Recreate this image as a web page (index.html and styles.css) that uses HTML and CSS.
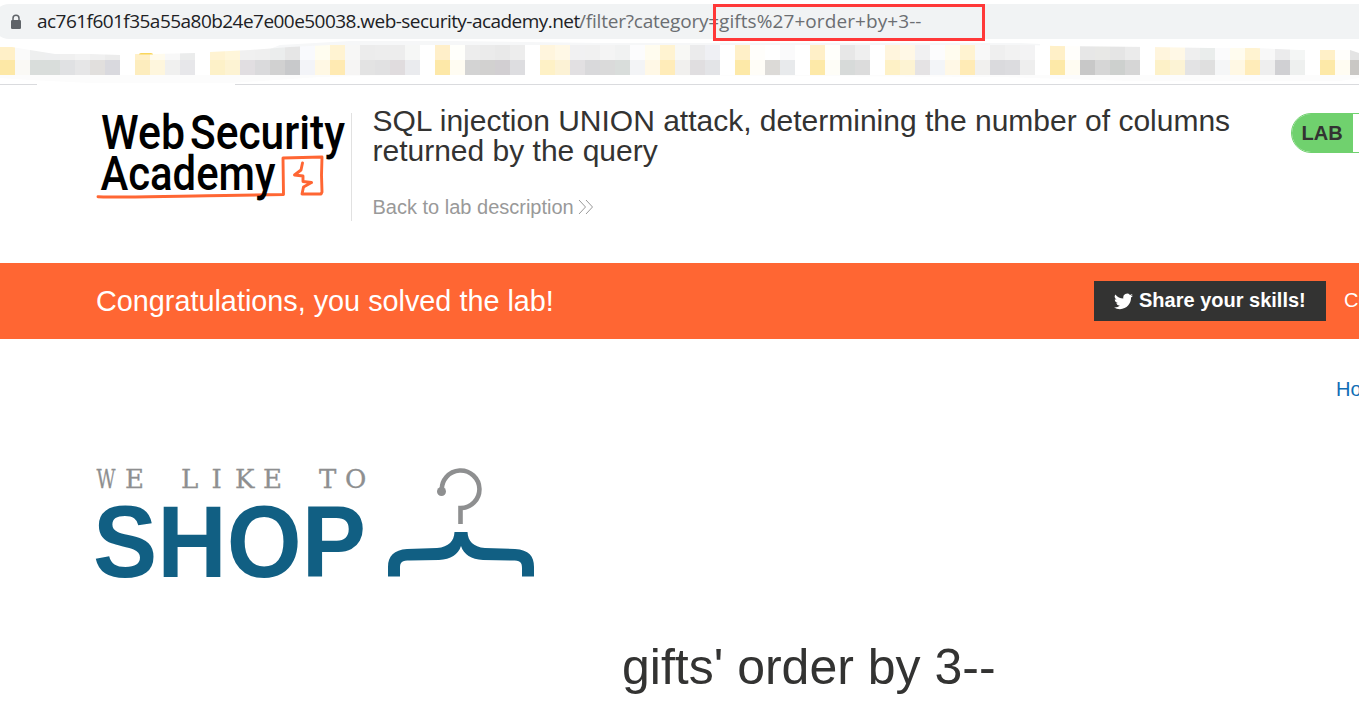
FILE: index.html
```html
<!DOCTYPE html>
<html lang="en">
<head>
<meta charset="utf-8">
<title>SQL injection UNION attack</title>
<link rel="stylesheet" href="styles.css">
</head>
<body>
<div class="browser">
  <div class="omnibox">
    <svg class="lock" width="12" height="16" viewBox="0 0 12 16"><rect x="1" y="6" width="10" height="9" rx="1.3" fill="#5f6368"/><path d="M3 7V4.2a3 3 0 0 1 6 0V7" fill="none" stroke="#5f6368" stroke-width="1.5"/></svg>
    <div class="url"><span class="host">ac761f601f35a55a80b24e7e00e50038.web-security-academy.net</span><span class="path">/filter?category=</span><span class="query">gifts%27+order+by+3--</span></div>
    <div class="mark"></div>
  </div>
  <svg class="bookmarks" width="1359" height="42" viewBox="0 0 1359 42">
    <path d="M280 4 L350 0 L450 0 L600 2 L1020 2 L1040 3 L1040 8 L270 8Z" fill="#f6f7f8"/>
    <path d="M0 33H1359V37L1340 40H1130L1000 36L440 33L320 36L230 42H90L30 39L0 37Z" fill="#fcfcfc"/>
    <defs><clipPath id="strip"><path d="M0 6L12 6L30 9L55 13L90 13L120 14L137 13L155 13L195 12L210 11L250 9L290 6L330 4H1030L1055 5L1150 6L1210 7L1255 7L1300 9H1350L1359 12V34H0Z"/></clipPath></defs>
    <g id="tiles" clip-path="url(#strip)"></g>
    <path d="M139 13.500Q139 12 141 12H151Q153 12 153 13.500Z" fill="#f9d65c"/>
  </svg>
  <div class="edge"><i class="edge-a"></i><i class="edge-b"></i></div>
</div>
<header class="lab-head">
  <svg class="academy" width="255" height="108" viewBox="96 113 255 108">
    <g class="academy-text">
      <text x="101" y="149" textLength="84" lengthAdjust="spacingAndGlyphs">Web</text>
      <text x="190" y="149" textLength="155" lengthAdjust="spacingAndGlyphs">Security</text>
    </g>
    <g fill="none" stroke="#ff6633" stroke-linejoin="round" stroke-linecap="round">
      <path d="M98 196.700C140 198 190 195.500 225 195.500L283.500 194.500L283 158L322 157L321.500 175L322 192L321 194L302 194L303.500 187L311.500 182.500L303 181.500L303 176L294.500 175L301 170L302.500 163" stroke-width="2.900"/>
    </g>
    <text class="academy-text" x="100.500" y="189.500" textLength="175" lengthAdjust="spacingAndGlyphs">Academy</text>
  </svg>
  <div class="title-box">
    <h2>SQL injection UNION attack, determining the number of columns<br>returned by the query</h2>
    <a class="back"><span>Back to lab description</span><svg width="16" height="18" viewBox="0 0 16 18"><path d="M1 1L7.500 8L1 15M8 1L14.500 8L8 15" fill="none" stroke="#999" stroke-width="1"/></svg></a>
  </div>
  <div class="status"><span>LAB</span></div>
</header>
<section class="banner">
  <h4>Congratulations, you solved the lab!</h4>
  <a class="share"><svg width="19" height="17" viewBox="0 0 24 20"><path fill="#fff" d="M24 2.400a9.800 9.800 0 0 1-2.800.800A4.900 4.900 0 0 0 23.300.500a9.900 9.900 0 0 1-3.100 1.200A4.900 4.900 0 0 0 11.800 6.100 14 14 0 0 1 1.700 1a4.900 4.900 0 0 0 1.500 6.600A4.900 4.900 0 0 1 1 7v.100a4.900 4.900 0 0 0 3.900 4.800 5 5 0 0 1-2.200.100 4.900 4.900 0 0 0 4.600 3.400A9.900 9.900 0 0 1 0 17.500 14 14 0 0 0 7.500 19.700c9.100 0 14.300-7.700 14-14.600A10 10 0 0 0 24 2.400Z"/></svg><span>Share your skills!</span></a>
  <span class="continue">Continue learning</span>
</section>
<main>
  <nav><a>Home</a></nav>
  <svg class="shop" width="440" height="112" viewBox="95 467 440 112">
    <g class="we">
      <text x="96.500" y="488" textLength="19" lengthAdjust="spacingAndGlyphs">W</text>
      <text x="125" y="488">E</text>
      <text y="488" x="181 211.500 235 263">LIKE</text>
      <text y="488" x="319 345">TO</text>
    </g>
    <text class="word" x="93" y="577" textLength="273" lengthAdjust="spacingAndGlyphs">SHOP</text>
    <circle cx="441.500" cy="491.500" r="4.500" fill="#8e8f90"/>
    <path d="M441.900 491A18.800 18.800 0 1 1 460.500 508.100V524" fill="none" stroke="#8e8f90" stroke-width="4.600"/>
    <path fill="#115f83" d="M454.500 532H467.500C468 541 473 547 485 548L515 549C529 550 534 556 534 567V576.500H522V568C522 562 520 560.500 512 560.500L483 560C471 559 464 555 461 546C458 555 451 559 439 560L410 560.500C402 560.500 400 562 400 568V576.500H388V567C388 556 394 550 407 549L437 548C449 547 454 541 454.500 532Z"/>
  </svg>
  <h1>gifts' order by 3--</h1>
</main>
<script src="tiles.js"></script>
</body>
</html>
```
FILE: styles.css
```css
* { box-sizing: border-box; }
body { margin: 0; width: 1359px; height: 709px; overflow: hidden; background: #fff; color: #333332; font-family: "Liberation Sans", Arial, sans-serif; }
h1, h2, h4 { margin: 0; font-weight: 400; }
.browser { height: 85px; padding-top: 4px; display: flex; flex-direction: column; }
.omnibox { position: relative; height: 35px; margin-left: -8px; padding-left: 18px; border-radius: 18px 0 0 18px; background: #f1f3f4; display: flex; align-items: center; }
.lock { flex: none; }
.url { margin-left: 15px; display: flex; font: 19px/35px "Open Sans", "Noto Sans", sans-serif; white-space: nowrap; color: #6b6e72; }
.url span { flex: none; }
.host { width: 542px; color: #202124; letter-spacing: -0.54px; }
.path { width: 140px; letter-spacing: -0.2px; }
.query { letter-spacing: 0.08px; }
.mark { position: absolute; left: 721px; top: 0; width: 272px; height: 37px; border: 3px solid #ff3838; }
.bookmarks { display: block; margin-top: 2px; }
.edge { display: flex; justify-content: space-between; margin-top: auto; height: 1px; }
.edge i { background: #dadbde; }
.edge-a { width: 37px; }
.edge-b { width: 1124px; }
.lab-head { height: 178px; padding: 28px 0 0 96px; display: flex; align-items: flex-start; overflow: hidden; }
.academy { flex: none; overflow: visible; }
.academy-text { font: 500 47.500px Roboto, sans-serif; fill: #000; }
.title-box { height: 108px; width: 918px; padding-left: 20.500px; border-left: 1px solid #e1e1e1; flex: none; display: flex; flex-direction: column; margin-right: 22px; }
.title-box h2 { font-size: 30px; line-height: 30px; margin-top: -7px; white-space: nowrap; }
.back { display: flex; align-items: center; gap: 4px; margin-top: 30px; font-size: 20px; line-height: 23px; color: #999; }
.status { flex: none; width: 140px; height: 40px; border: 1px solid #70d16e; border-radius: 20px; overflow: hidden; display: flex; }
.status span { width: 61px; background: #70d16e; font-weight: 700; font-size: 20px; line-height: 39px; padding-left: 9.500px; }
.banner { height: 76px; background: #ff6633; color: #fff; padding-left: 96px; display: flex; align-items: center; overflow: hidden; }
.banner h4 { width: 998px; flex: none; font-size: 28.800px; }
.share { flex: none; width: 232px; height: 40px; background: #333332; display: flex; align-items: center; padding: 0 0 2px 20px; gap: 6px; font-weight: 700; font-size: 20px; white-space: nowrap; }
.share svg { margin-top: 3px; }
.continue { margin-left: 18px; flex: none; font-size: 20px; padding-bottom: 2px; }
main { display: flex; flex-direction: column; align-items: flex-start; }
nav { width: 1359px; overflow: hidden; padding: 38px 0 0 1336px; height: 128px; font-size: 20px; line-height: 24px; color: #0f6db5; white-space: nowrap; }
.shop { margin-left: 95px; flex: none; overflow: visible; }
.we { font: 26px "DejaVu Serif", serif; fill: #8e8f90; stroke: #8e8f90; stroke-width: 0.3px; }
.word { font: 700 102px "Liberation Sans", sans-serif; fill: #115f83; }
h1 { margin: 58px 0 0 622px; font-size: 50px; line-height: 60px; white-space: nowrap; }
```
FILE: tiles.js
```js
// Two rows of 15px colour tiles for the blurred bookmarks bar.
const lower = ('fde8a6 faf9f5 d9dddb d9dddb e0e1e3 e6e6e7 e1dfdd d9d9de ffffff fdedbe fef6dd f0f0ef e7e7ea ffffff fdf1c8 fdf3d3 e1dee1 dadadc d1d1d1 c8c9cb f3f4f8 fff8e4 ffeab2 f6f5f4 e3e3e3 e1e1e2 e0dcde eaebee ffffff fde8a8 ' +
  'fffcf2 d3d3d3 d2d1d0 d2cfd2 dddde0 ffffff fef1c6 fcf2d5 e2e0e2 d9d9db dadada d9dddb f3f4f6 fff8e6 ffecb9 f1f0ee e0dee0 e3e4e7 ffffff fde9a8 fffdf7 dcdad7 e8eaec ffffff fde9a8 fefdf7 d7dad9 dcdcdc ffffff fef1c6 ' +
  'fdf3d3 e5e3e4 f3f5f8 fff8e6 ffebb6 f1f0ee dadadd dcdcdf eeeeee ffffff fde9a8 fffcf2 c8c8c8 d6d6d6 cdd0ce d6d6d6 ffffff fdf1c8 fcf3d5 e3e3e4 dfdfdf f5f6f7 fff8e4 ffecb9 eeeeee d0d0d3 eef0ef ffffff fde9a8 fffcf2 c9c7c4').split(' ');
const upper = ('fff0c8 fafafa eeefef eeeff0 f0f0f0 f3f3f3 f0f0f0 ececec ffffff fff0c8 fffbed f8f8f8 ebecec ffffff fff3d2 fff6da f0f0f0 efefef ebeded e6e6e6 f9fafd fffdf0 fff3d2 f7f7f6 ececec ededed ededed f6f7f6 ffffff ffefc9 ' +
  'fffffb ededed ebebeb e9e9e9 ededed ffffff fff5dd fff8e6 f1f1f2 f1f1f1 f4f4f4 f1f2f2 fcfcfd fffcef fff3d1 f8f8f5 ebebec eff0f4 ffffff fff0c8 fffefb ffffff fafafb ffffff fff0c8 fffffb e7e7e7 efefef ffffff fff5dd ' +
  'fff8e6 f1f1f2 fcfcfd fffcef fff3d1 f8f8f8 efefef f2f2f2 f3f3f4 ffffff fff0c8 fffefb e7e7e7 e8e8e6 e5e5e5 ebebeb ffffff fff5dd fff8e6 efefef eaedec fbfbfc fffcef fff3d1 f8f8f8 ebebec f4f6f5 ffffff fff0c8 fffefb e4e4e4').split(' ');
const group = document.getElementById('tiles');
[upper, lower].forEach((row, r) => row.forEach((color, i) => {
  const tile = document.createElementNS('http://www.w3.org/2000/svg', 'rect');
  tile.setAttribute('x', i * 15);
  tile.setAttribute('y', 4 + r * 15);
  tile.setAttribute('width', 15);
  tile.setAttribute('height', 15);
  tile.setAttribute('fill', '#' + color);
  group.appendChild(tile);
}));
```
